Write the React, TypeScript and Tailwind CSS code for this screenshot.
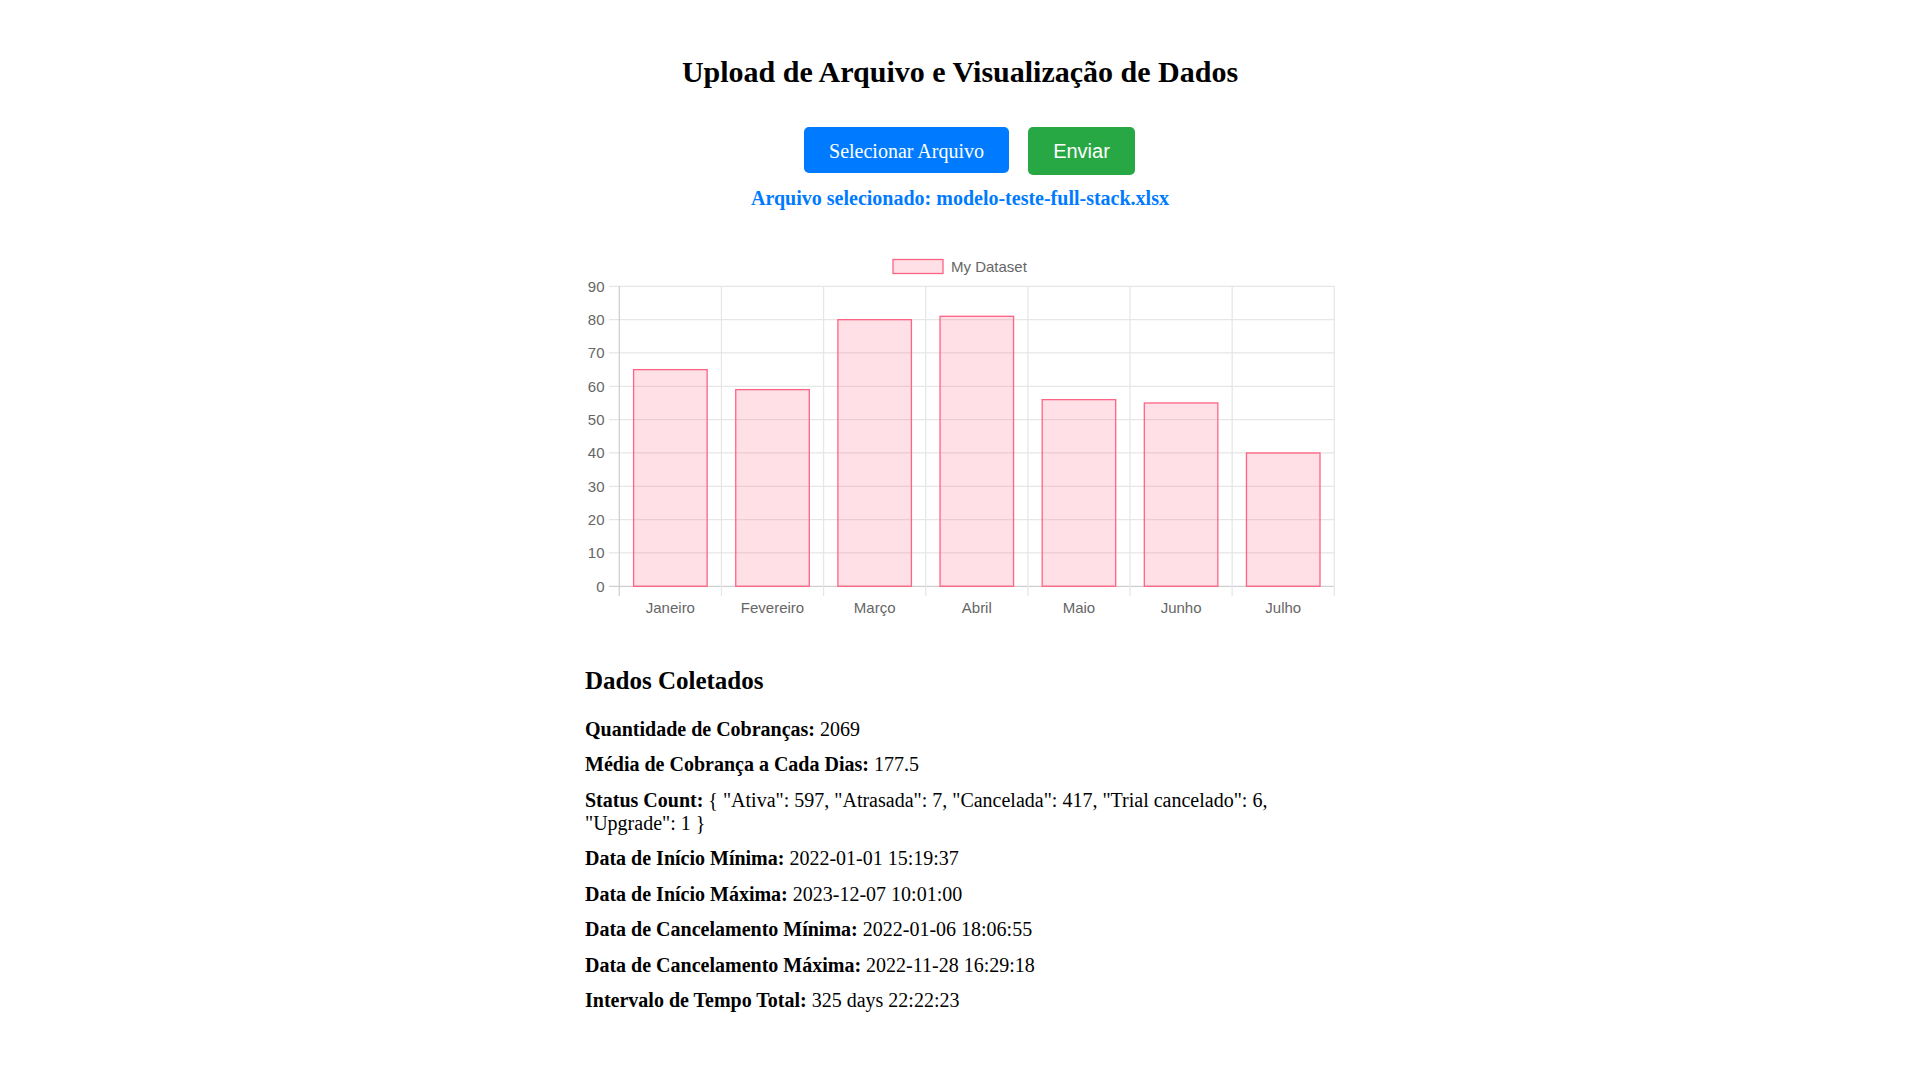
const labels = ["Janeiro", "Fevereiro", "Março", "Abril", "Maio", "Junho", "Julho"]
const values = [65, 59, 80, 81, 56, 55, 40]

// plot area inside the 750x375 canvas
const left = 34.3
const right = 749.3
const top = 37.3
const bottom = 337.3
const maxY = 90
const step = (right - left) / labels.length
const barW = step * 0.72

const yFor = (v: number) => bottom - (v / maxY) * (bottom - top)

function BarChart() {
  const ticks = [0, 10, 20, 30, 40, 50, 60, 70, 80, 90]
  return (
    <svg width="750" height="375" viewBox="0 0 750 375" className="block">
      {/* Legend */}
      <rect x="308" y="10.5" width="50" height="14" fill="rgba(255,99,132,0.2)" stroke="rgb(255,99,132)" strokeWidth="1.3" />
      <text x="366" y="22.5" fontFamily="'Liberation Sans', Arial, sans-serif" fontSize="15" fill="#666">
        My Dataset
      </text>

      {/* Horizontal grid + y labels */}
      {ticks.map((t) => (
        <g key={t}>
          <line x1="24" x2={right} y1={yFor(t)} y2={yFor(t)} stroke={t === 0 ? "#cfcfcf" : "#e6e6e6"} strokeWidth="1.25" />
          <text
            x="19.5"
            y={yFor(t) + 5.3}
            textAnchor="end"
            fontFamily="'Liberation Sans', Arial, sans-serif"
            fontSize="15"
            fill="#666"
          >
            {t}
          </text>
        </g>
      ))}

      {/* Vertical grid */}
      {Array.from({ length: labels.length + 1 }).map((_, i) => (
        <line
          key={i}
          x1={left + i * step}
          x2={left + i * step}
          y1={top}
          y2={347}
          stroke={i === 0 ? "#cfcfcf" : "#e6e6e6"}
          strokeWidth="1.25"
        />
      ))}

      {/* Bars */}
      {values.map((v, i) => {
        const x = left + i * step + (step - barW) / 2
        const y = yFor(v)
        return (
          <rect
            key={i}
            x={x}
            y={y}
            width={barW}
            height={bottom - y}
            fill="rgba(255,99,132,0.2)"
            stroke="rgb(255,99,132)"
            strokeWidth="1.3"
          />
        )
      })}

      {/* X labels */}
      {labels.map((l, i) => (
        <text
          key={l}
          x={left + i * step + step / 2}
          y="364"
          textAnchor="middle"
          fontFamily="'Liberation Sans', Arial, sans-serif"
          fontSize="15"
          fill="#666"
        >
          {l}
        </text>
      ))}
    </svg>
  )
}

const stats: [string, string][] = [
  ["Quantidade de Cobranças:", "2069"],
  ["Média de Cobrança a Cada Dias:", "177.5"],
  ["Status Count:", '{ "Ativa": 597, "Atrasada": 7, "Cancelada": 417, "Trial cancelado": 6, "Upgrade": 1 }'],
  ["Data de Início Mínima:", "2022-01-01 15:19:37"],
  ["Data de Início Máxima:", "2023-12-07 10:01:00"],
  ["Data de Cancelamento Mínima:", "2022-01-06 18:06:55"],
  ["Data de Cancelamento Máxima:", "2022-11-28 16:29:18"],
  ["Intervalo de Tempo Total:", "325 days 22:22:23"],
]

export default function App() {
  return (
    <main className="min-h-screen w-full bg-white font-['Liberation_Serif',serif] text-black">
      <div className="mx-auto flex w-[750px] flex-col items-center pt-[55px]">
        {/* Title */}
        <h2 className="whitespace-nowrap text-[30px] font-bold leading-[34px]">
          Upload de Arquivo e Visualização de Dados
        </h2>

        {/* Upload buttons */}
        <div className="mt-[38px] flex items-start gap-[19px] pl-[19px]">
          <label className="flex h-[46px] w-[205px] cursor-pointer items-center justify-center rounded-[5px] bg-[#007bff] pt-[2px] text-[20px] leading-[23px] text-white">
            Selecionar Arquivo
          </label>
          <button className="flex h-[48px] w-[107px] items-center justify-center rounded-[5px] bg-[#28a745] font-['Liberation_Sans',Arial,sans-serif] text-[20px] leading-[23px] text-white">
            Enviar
          </button>
        </div>

        <p className="mt-[12px] text-[20px] font-bold leading-[23px] text-[#007bff]">
          Arquivo selecionado: modelo-teste-full-stack.xlsx
        </p>

        {/* Chart */}
        <div className="mt-[39px] h-[375px] w-[750px]">
          <BarChart />
        </div>

        {/* Collected data */}
        <div className="mt-[43px] w-full">
          <h3 className="text-[25px] font-bold leading-[28px]">Dados Coletados</h3>
          <div className="mt-[22.5px] flex flex-col gap-[12.5px]">
            {stats.map(([k, v]) => (
              <p key={k} className="text-[20px] leading-[23px]">
                <strong>{k}</strong> {v}
              </p>
            ))}
          </div>
        </div>
      </div>
    </main>
  )
}
